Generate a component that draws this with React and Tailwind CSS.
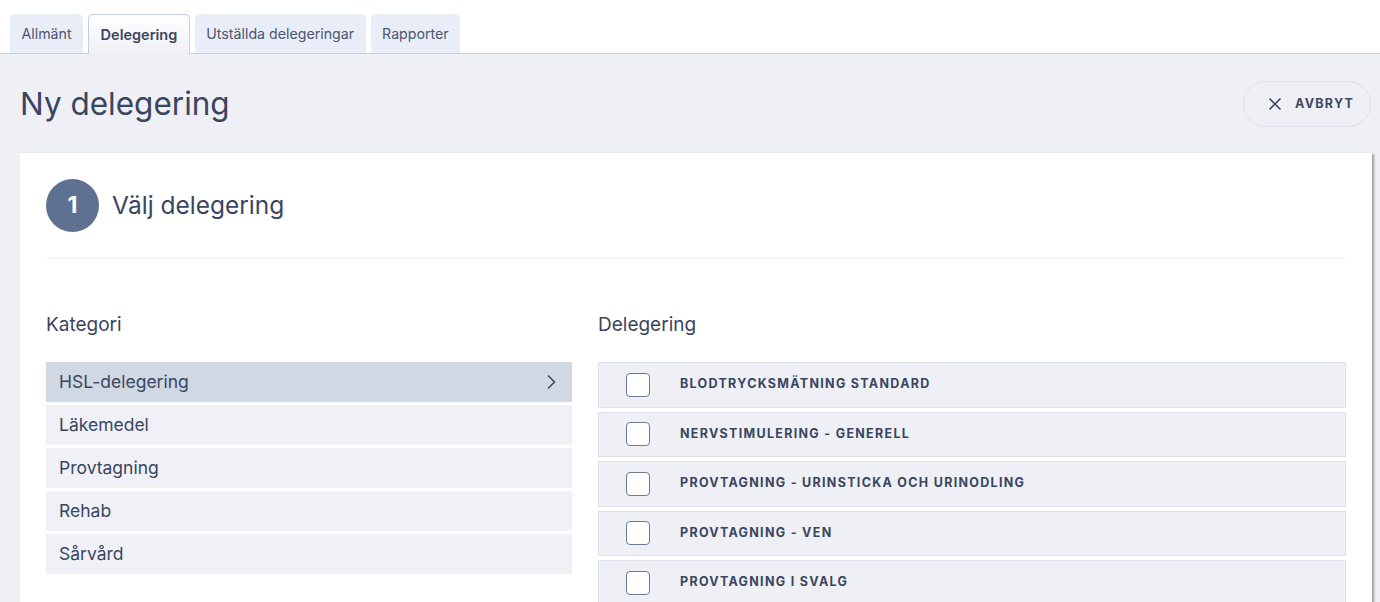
import React from 'react';

const tabs = ['Allmänt', 'Delegering', 'Utställda delegeringar', 'Rapporter'];
const categories = ['HSL-delegering', 'Läkemedel', 'Provtagning', 'Rehab', 'Sårvård'];
const delegations = [
  'Blodtrycksmätning standard',
  'Nervstimulering - generell',
  'Provtagning - urinsticka och urinodling',
  'Provtagning - ven',
  'Provtagning i svalg',
];

export default function App() {
  return (
    <div className="min-h-screen bg-[#eff0f5] text-[#3a4560] font-['Inter',sans-serif] overflow-hidden">
      {/* Tabs */}
      <div className="bg-white pt-[14px] pl-[10px] flex gap-[5px] border-b border-[#c8d0e2]">
        {tabs.map((t, i) =>
          i === 1 ? (
            <div
              key={t}
              className="h-[40px] -mb-px px-[11.5px] flex items-center rounded-t-[5px] border border-b-0 border-[#c3cde2] bg-gradient-to-b from-white to-[#eff0f5] text-[14.5px] font-semibold text-[#3a4560]"
            >
              {t}
            </div>
          ) : (
            <div
              key={t}
              className="h-[39px] px-[11.5px] flex items-center rounded-t-[5px] bg-[#e9edf7] text-[14.2px] text-[#4a5570]"
            >
              {t}
            </div>
          )
        )}
      </div>

      {/* Header */}
      <div className="flex items-center justify-between pl-[20px] pr-[9px] pt-[27px] pb-[26px]">
        <h1 className="text-[31.5px] leading-[46px] text-[#3a4560]">Ny delegering</h1>
        <button className="h-[46px] w-[128px] flex items-center pl-[24px] gap-[13px] rounded-full border border-[#dde2ec] text-[12.5px] font-bold tracking-[1.3px] text-[#3d4862]">
          <svg width="14" height="14" viewBox="0 0 14 14" fill="none" stroke="currentColor" strokeWidth="1.6">
            <path d="M1.5 1.5 L12.5 12.5 M12.5 1.5 L1.5 12.5" />
          </svg>
          AVBRYT
        </button>
      </div>

      {/* Card */}
      <div className="ml-[20px] mr-[8px] bg-white shadow-[2px_1px_2px_rgba(0,0,0,0.35)] px-[26px] pt-[26px] pb-[40px]">
        <div className="flex items-center gap-[13px] pb-[26px] border-b border-[#eceef3]">
          <div className="w-[53px] h-[53px] rounded-full bg-[#5f7190] flex items-center justify-center text-white text-[23px] font-bold">
            1
          </div>
          <div className="text-[24.5px] text-[#3a4560]">Välj delegering</div>
        </div>

        <div className="flex gap-[26px] pt-[52px]">
          <div className="w-[526px] shrink-0">
            <div className="text-[19px] text-[#3a4560] leading-[28px] mb-[23px]">Kategori</div>
            <div className="flex flex-col gap-[3px]">
              {categories.map((c, i) => (
                <div
                  key={c}
                  className={`h-[40px] pl-[13px] pr-[16px] flex items-center justify-between text-[17.5px] text-[#3a4560] ${
                    i === 0 ? 'bg-[#d0d8e4]' : 'bg-[#eff1f6]'
                  }`}
                >
                  {c}
                  {i === 0 && (
                    <svg width="10" height="16" viewBox="0 0 10 16" fill="none" stroke="currentColor" strokeWidth="1.5">
                      <path d="M2 1.5 L8.5 8 L2 14.5" />
                    </svg>
                  )}
                </div>
              ))}
            </div>
          </div>

          <div className="flex-1">
            <div className="text-[19px] text-[#3a4560] leading-[28px] mb-[23px]">Delegering</div>
            <div className="flex flex-col gap-[4px]">
              {delegations.map((d) => (
                <div
                  key={d}
                  className="h-[45.5px] flex items-center bg-[#eef0f6] border border-[#dde2ee] pl-[27px]"
                >
                  <div className="w-[24px] h-[24px] rounded-[4px] border-[1.5px] border-[#6c7a94] bg-white" />
                  <div className="ml-[30px] text-[12.5px] font-bold uppercase tracking-[1.3px] text-[#3a4560]">
                    {d}
                  </div>
                </div>
              ))}
            </div>
          </div>
        </div>
      </div>
    </div>
  );
}
